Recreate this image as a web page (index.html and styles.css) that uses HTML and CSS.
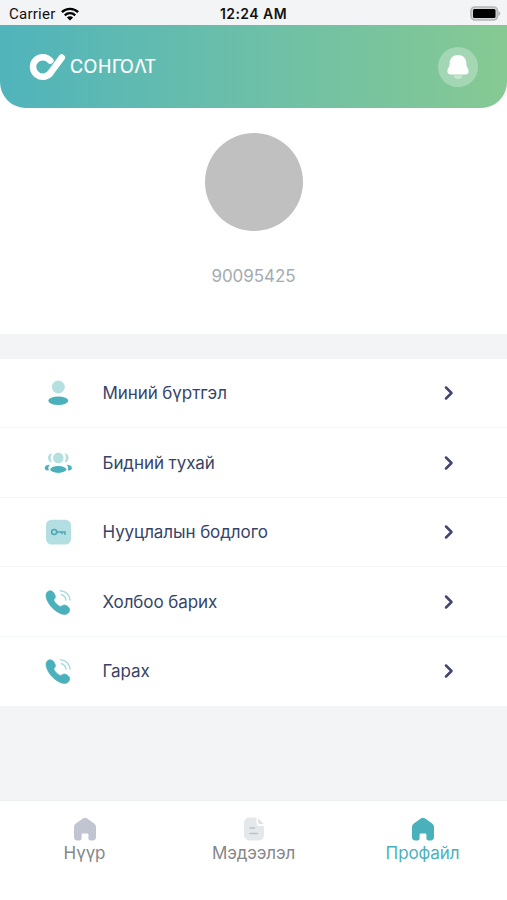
FILE: index.html
```html
<!DOCTYPE html>
<html lang="mn">
<head>
<meta charset="utf-8">
<title>Сонголт</title>
<link rel="stylesheet" href="styles.css">
</head>
<body>
<svg class="defs" width="0" height="0" aria-hidden="true">
  <symbol id="chevron" viewBox="0 0 10 16"><path d="M2 2.500 7.500 8 2 13.500" fill="none" stroke="currentColor" stroke-width="2.500" stroke-linecap="round" stroke-linejoin="round"/></symbol>
  <symbol id="home" viewBox="0 0 24 24"><path d="M10.200 1.300a3 3 0 0 1 3.600 0l7.400 5.200A4 4 0 0 1 23 9.800V20a3.400 3.400 0 0 1-3.400 3.400h-2.400a1.800 1.800 0 0 1-1.800-1.800v-4a1 1 0 0 0-1-1H9.600a1 1 0 0 0-1 1v4a1.800 1.800 0 0 1-1.800 1.800H4.400A3.400 3.400 0 0 1 1 20V9.800a4 4 0 0 1 1.800-3.300z" fill="currentColor"/></symbol>
  <symbol id="phone" viewBox="0 0 28 28"><path d="M2 7.200C2 4.200 4.600 2.400 6.900 2.800c2.200.4 4.500 3.900 4.500 6 0 1.900-1.700 2.200-1.500 3.400.4 2 4.300 5.800 6.300 6.200 1.500.3 2.500-1.500 4.200-1.400 2.200.1 5.300 2.600 5.300 4.700 0 2.300-2.500 4.900-5.200 4.800C12.700 26.200 2 15.400 2 7.200z" fill="#4ab1bc" stroke="#4ab1bc" stroke-width=".7"/><path d="M17.300 6.800q4 1 4.700 5.300M16.500 2.700q8.300.8 9.600 9.300" fill="none" stroke="#a9dcde" stroke-width="1.500" stroke-linecap="round"/></symbol>
</svg>
<div class="status">
  <div class="carrier"><span>Carrier</span>
    <svg width="18" height="14" viewBox="0 0 18 14" fill="none" stroke="#000" stroke-width="2.400"><path d="M.9 5.200a11.600 11.600 0 0 1 16.200 0M3.800 8.300a7.400 7.400 0 0 1 10.400 0"/><path d="M9 13.600 5.900 10.500a4.400 4.400 0 0 1 6.200 0z" fill="#000" stroke="none"/></svg>
  </div>
  <b class="time">12:24 AM</b>
  <svg class="battery" width="31" height="16" viewBox="0 0 31 16"><rect x="1" y="1" width="26.500" height="13" rx="4" fill="#d5d6d7" stroke="#b4b6b7" stroke-width="1.600"/><rect x="3" y="3" width="22.500" height="9" rx="1.500"/><path d="M28.500 5q3.500 2.500 0 5z" fill="#aeb0b1"/></svg>
</div>
<header class="header">
  <div class="brand">
    <svg width="37" height="28" viewBox="0 0 37 28" fill="none" stroke="#fff" stroke-linecap="round" stroke-linejoin="round"><path d="M21.300 7.600A9.800 9.800 0 1 0 22.400 18.700L32.800 4.500" stroke-width="6.500"/></svg>
    <svg width="87" height="20" viewBox="0 0 87 20"><text class="wordmark" x="0 13.600 28 42 50 64.200 74.400" y="16.400">СОНГОΛТ</text></svg>
  </div>
  <div class="bell"><svg width="24" height="28" viewBox="0 0 24 28"><path d="M12 2c-5 0-8.300 3.300-8.300 8 0 4-2.300 5.500-2.300 8.200 0 2.200 1.300 3.300 3.400 3.300h14.400c2.100 0 3.400-1.100 3.400-3.300 0-2.700-2.300-4.200-2.300-8.200 0-4.700-3.300-8-8.300-8z" fill="#fff"/><path d="M7.500 22.500h9Q15.500 26 12 26t-4.500-3.500z" fill="#c7e7cf"/></svg></div>
</header>
<section class="profile"><div class="avatar"></div><div class="number">90095425</div></section>
<main class="menu">
  <div class="row"><svg class="icon" viewBox="0 0 28 28"><circle cx="14.300" cy="8" r="6.500" fill="#b6e0e0"/><ellipse cx="14.300" cy="21.800" rx="10" ry="4.200" fill="#4ab1bc"/></svg><span>Миний бүртгэл</span><svg class="go"><use href="#chevron"/></svg></div>
  <div class="row"><svg class="icon" viewBox="0 0 28 28"><path d="M8 4.200A4.700 4.700 0 0 0 8 13.500Q5.600 9 8 4.200zM20.600 4.200a4.700 4.700 0 0 1 0 9.300Q23 9 20.600 4.200z" fill="#b6e0e0"/><circle cx="14.300" cy="8.900" r="5.300" fill="#b6e0e0"/><ellipse cx="14.300" cy="20.400" rx="8" ry="3.500" fill="#4ab1bc"/><path d="M6 15.800Q.6 16.200.7 19t4.300 2.300q-1.700-3 1-5.500zM22.600 15.800q5.400.4 5.300 3.200t-4.300 2.300q1.700-3-1-5.500z" fill="#4ab1bc"/></svg><span>Бидний тухай</span><svg class="go"><use href="#chevron"/></svg></div>
  <div class="row"><svg class="icon" viewBox="0 0 28 28"><rect x="2" y="1.700" width="25" height="24.800" rx="5.500" fill="#b4dfe2"/><path d="M12.800 14H21v2.700M18 14v2.300" fill="none" stroke="#4ba9b5" stroke-width="1.600" stroke-linejoin="round"/><circle cx="10.200" cy="14" r="2.500" fill="none" stroke="#4ba9b5" stroke-width="1.600"/></svg><span>Нууцлалын бодлого</span><svg class="go"><use href="#chevron"/></svg></div>
  <div class="row"><svg class="icon"><use href="#phone"/></svg><span>Холбоо барих</span><svg class="go"><use href="#chevron"/></svg></div>
  <div class="row"><svg class="icon"><use href="#phone"/></svg><span>Гарах</span><svg class="go"><use href="#chevron"/></svg></div>
</main>
<nav class="tabs">
  <div class="tab"><svg class="home"><use href="#home"/></svg><span>Нүүр</span></div>
  <div class="tab"><svg viewBox="0 0 24 24"><path d="M7 .5h7.500V6a3 3 0 0 0 3 3H22v9a5.500 5.500 0 0 1-5.500 5.500H7.300A5.500 5.500 0 0 1 2 18V6A5.500 5.500 0 0 1 7 .5z" fill="#e4e8eb"/><path d="M16 1.500 21.800 7H18q-2 0-2-2z" fill="#dce1e5"/><path d="M8 11h4.500M8 16.500h7.500" stroke="#b9c1c9" stroke-width="1.500" stroke-linecap="round"/></svg><span>Мэдээлэл</span></div>
  <div class="tab active"><svg><use href="#home"/></svg><span>Профайл</span></div>
</nav>
</body>
</html>
```
FILE: styles.css
```css
* { box-sizing: border-box; }
body { margin: 0; height: 900px; display: flex; flex-direction: column; overflow: hidden; background: #f2f4f6; font-family: Inter, "Liberation Sans", sans-serif; }
svg { display: block; flex: none; }
.defs { position: absolute; }
.status { position: relative; z-index: 1; height: 25px; flex: none; display: grid; grid-template-columns: 1fr auto 1fr; align-items: center; padding: 2px 6px 0 9px; font-size: 14px; color: #111; background: #f2f4f6; }
.carrier { display: flex; align-items: center; gap: 5px; font-family: Roboto, sans-serif; font-size: 15px; letter-spacing: .25px; }
.time { font-weight: 600; font-size: 14px; letter-spacing: .45px; margin-right: 3px; }
.battery { justify-self: end; }
.header { position: relative; z-index: 1; height: 83px; flex: none; display: flex; align-items: center; justify-content: space-between; padding: 0 29px; background: linear-gradient(90deg, #50b4bb, #67bdac 40%, #86c993); border-radius: 0 0 26px 26px; }
.brand { display: flex; align-items: center; gap: 4px; }
.wordmark { font-family: Inter, sans-serif; font-size: 18px; font-weight: 400; fill: #fff; stroke: #fff; stroke-width: .2px; }
.bell { width: 40px; height: 40px; border-radius: 50%; background: rgba(255, 255, 255, .28); display: grid; place-items: center; }
.profile { height: 334px; margin-top: -108px; padding-top: 133px; flex: none; display: flex; flex-direction: column; align-items: center; background: #fff; }
.avatar { width: 98px; height: 98px; border-radius: 50%; background: #c0c0c0; }
.number { margin-top: 34px; font-size: 17px; line-height: 22px; color: #a4abb2; letter-spacing: -.05px; }
.menu { margin-top: 25px; height: 347px; flex: none; display: grid; grid-template-rows: 69px 70px 69px 70px 69px; background: #fff; }
.row { display: flex; align-items: center; padding: 0 53px 0 44px; border-bottom: 1px solid #f3f4f6; color: #364468; font-size: 17px; letter-spacing: -.08px; }
.row:last-child { border-bottom-color: #fff; }
.icon { width: 28px; height: 28px; margin-right: 30.500px; }
.row span { flex: 1; }
.go { width: 10px; height: 16px; color: #42466f; }
.tabs { margin-top: auto; height: 100px; flex: none; display: grid; grid-template-columns: repeat(3, 1fr); padding-top: 16px; background: #fff; border-top: 1px solid #eceef0; }
.tab { display: flex; flex-direction: column; align-items: center; font-size: 17px; line-height: 24px; letter-spacing: -.1px; color: #85868a; }
.tab svg { width: 24px; height: 24px; }
.tab .home { color: #c0c5d1; }
.tab.active { color: #4ab1bc; }
```
